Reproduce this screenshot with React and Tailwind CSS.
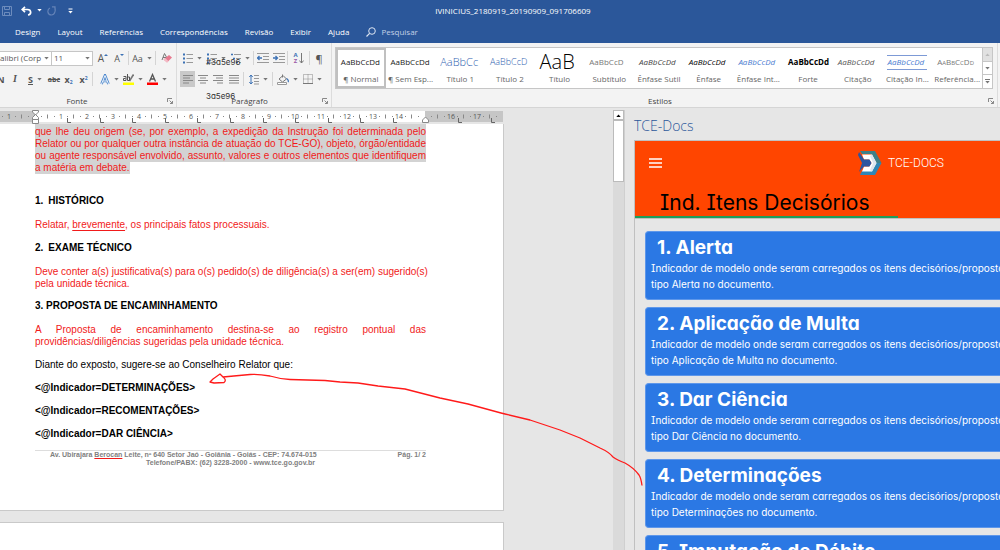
import React from "react";

const ui = "font-['Open_Sans','Noto_Sans',sans-serif]";
const rounded = "font-['Inter',sans-serif] [font-feature-settings:'cv11','cv08']";

function Caret({ className = "text-[#777]" }) {
  return (
    <svg viewBox="0 0 5 3" className={`h-[3px] w-[5px] shrink-0 ${className}`} aria-hidden="true">
      <path d="M.3 0h4.400L2.500 2.600z" fill="currentColor" />
    </svg>
  );
}

function Icon({ w = 12, h = 12, children }) {
  return (
    <svg width={w} height={h} viewBox={`0 0 ${w} ${h}`} fill="none" className="shrink-0" aria-hidden="true">
      {children}
    </svg>
  );
}

function Tool({ label, className = "w-4", caret, children }) {
  return (
    <button
      type="button"
      aria-label={label}
      className={`flex h-4 shrink-0 items-center justify-center gap-1 leading-none text-[#555] ${className}`}
    >
      {children}
      {caret && <Caret />}
    </button>
  );
}

const Sep = () => <span className="mx-px h-[14px] w-px shrink-0 bg-[#d4d4d4]" />;

function Launcher() {
  return (
    <button type="button" aria-label="Mais opções" className="flex h-3 w-3 items-center justify-center">
      <Icon w={6} h={6}>
        <path d="M.5 4V.5H5M2.500 2.500l3 3M5.500 3v2.500H3" stroke="#888" />
      </Icon>
    </button>
  );
}

function Group({ label, className, labelClass = "", children }) {
  return (
    <section className={`relative flex flex-col ${className}`} aria-label={label}>
      {children}
      <div className="mt-auto flex h-3 items-center">
        <span className={`flex-1 text-center text-[8px] leading-3 text-[#444] ${labelClass}`}>{label}</span>
        <Launcher />
      </div>
    </section>
  );
}

function TitleBar() {
  return (
    <div className="flex h-[21px] items-center">
      <div className="flex w-[76px] items-center text-white">
        <button type="button" aria-label="Salvar" className="ml-[2px]">
          <Icon w={10} h={10}>
            <path d="M.5.5h9v9h-9zM2.500.5v3h5v-3M2.500 9.500v-3h5v3" stroke="#6d8cbd" />
          </Icon>
        </button>
        <button type="button" aria-label="Desfazer" className="ml-[9px] flex items-center gap-[5px]">
          <Icon w={11} h={10}>
            <path d="M4 .8L1.200 3.500 4 6.200M1.500 3.500h5c4 0 4.200 5 .5 5.500" stroke="#fff" strokeWidth="1.700" />
          </Icon>
          <Caret className="text-white" />
        </button>
        <button type="button" aria-label="Refazer" className="ml-[5px]">
          <Icon w={9} h={10}>
            <path d="M5 .8h3v3M7.800 1.200C8.800 4 8 9 4.500 9 .2 9-.2 3.500 3 2" stroke="#6483b7" strokeWidth="1.200" />
          </Icon>
        </button>
        <button type="button" aria-label="Personalizar" className="ml-[12px]">
          <Icon w={5} h={6}>
            <path d="M.5 1h4" stroke="#fff" />
            <path d="M.3 3h4.400L2.500 5.500z" fill="#fff" />
          </Icon>
        </button>
      </div>
      <h1 className="flex-1 pr-[50px] text-center text-[8px] leading-3 text-white">
        IVINICIUS_2180919_20190909_091706609
      </h1>
    </div>
  );
}

const tabs = ["Design", "Layout", "Referências", "Correspondências", "Revisão", "Exibir", "Ajuda"];

function TabBar() {
  return (
    <nav className="flex h-[22px] items-center gap-[17px] pl-[15px] text-[8px] leading-3 text-white">
      {tabs.map((t) => (
        <button type="button" key={t}>
          {t}
        </button>
      ))}
      <button type="button" className="flex items-center gap-[5px] text-[#c3d0e6]">
        <Icon w={10} h={10}>
          <circle cx="6" cy="4" r="3.300" stroke="#dde5f2" />
          <path d="M3.600 6.400L.5 9.500" stroke="#dde5f2" strokeWidth="1.200" />
        </Icon>
        Pesquisar
      </button>
    </nav>
  );
}

function Combo({ label, value, className }) {
  return (
    <div className={`relative h-[15px] shrink-0 border border-[#c6c6c6] bg-white ${className}`}>
      <select
        aria-label={label}
        className="block h-full w-full appearance-none bg-transparent pl-[2px] text-[8px] leading-3 text-[#555]"
      >
        <option>{value}</option>
      </select>
      <span className="pointer-events-none absolute inset-y-0 right-[2px] flex items-center">
        <Caret />
      </span>
    </div>
  );
}

function FontGroup() {
  return (
    <Group label="Fonte" labelClass="pr-[10px]" className="w-[177px] shrink-0 border-r border-[#dcdcdc] pt-[6px]">
      <div className="-ml-[8px] flex h-[18px] items-center">
        <Combo label="Fonte" value="Calibri (Corp" className="w-[60px]" />
        <Combo label="Tamanho" value="11" className="-ml-px w-[42px]" />
        <Tool label="Aumentar fonte" className="ml-[2px] w-4">
          <span className="flex items-center">
            <span className="text-[10px]">A</span>
            <Icon w={4} h={10}><path d="M0 3h4L2 1z" fill="#3d72b5" /></Icon>
          </span>
        </Tool>
        <Tool label="Diminuir fonte">
          <span className="flex items-center">
            <span className="text-[9px]">A</span>
            <Icon w={4} h={10}><path d="M0 1h4L2 3z" fill="#3d72b5" /></Icon>
          </span>
        </Tool>
        <Sep />
        <Tool label="Maiúsculas e minúsculas" className="w-[24px]" caret>
          <span className="text-[9px]">Aa</span>
        </Tool>
        <Sep />
        <Tool label="Limpar formatação" className="w-[19px]">
          <Icon w={12} h={12}>
            <path d="M1 8L3.500 1.500 6 6M2 5.500h3" stroke="#777" />
            <path d="M2.500 7.500L8 3l3 2.500L6 10.500z" fill="#e8798f" />
            <path d="M2.500 7.500L6 10.500l1.500-1.300L4.200 6z" fill="#f3bcc7" />
          </Icon>
        </Tool>
      </div>
      <div className="-ml-[5px] mt-[4px] flex h-4 items-center">
        <Tool label="Negrito" className="w-[12px]"><b className="text-[9px]">N</b></Tool>
        <Tool label="Itálico"><i className="font-['Liberation_Serif',serif] text-[10px] font-bold">I</i></Tool>
        <Tool label="Sublinhado" className="w-[24px]" caret><b className="text-[9px] underline">S</b></Tool>
        <Tool label="Tachado" className="w-[14px]"><b className="text-[7px] line-through">abc</b></Tool>
        <Tool label="Subscrito" className="w-[15px]">
          <b className="text-[9px]">x<sub className="text-[5px] text-[#3d72b5]">2</sub></b>
        </Tool>
        <Tool label="Sobrescrito" className="w-[15px]">
          <b className="text-[9px]">x<sup className="text-[5px] text-[#3d72b5]">2</sup></b>
        </Tool>
        <Sep />
        <Tool label="Efeitos de texto" className="ml-[3px] w-[24px]" caret>
          <Icon w={10} h={11}>
            <path d="M1.500 10L5 1.500 8.500 10M3 7h4" stroke="#4a86cc" strokeWidth="2.600" />
            <path d="M1.500 10L5 1.500 8.500 10M3 7h4" stroke="#fff" strokeWidth=".9" />
          </Icon>
        </Tool>
        <Tool label="Cor do realce" className="w-[24px]" caret>
          <Icon w={11} h={12}>
            <path d="M0 9.500h11v2.500H0z" fill="#ff0" />
            <path d="M6.500 8L10.500 1.500" stroke="#777" strokeWidth="1.600" />
            <path d="M.5 3.500h2.500v4h-2.500v-2h2M4.500 1v6.500h2v-3.500h-2" stroke="#555" />
          </Icon>
        </Tool>
        <Tool label="Cor da fonte" className="w-[24px]" caret>
          <Icon w={11} h={12}>
            <path d="M2.500 8.500l3-7 3 7M3.500 6h4" stroke="#555" strokeWidth="1.300" />
            <path d="M0 9.500h11v2.500H0z" fill="#f00" />
          </Icon>
        </Tool>
      </div>
    </Group>
  );
}

function ListIcon() {
  return (
    <Icon w={10} h={11}>
      <path d="M0 1.500h2M0 5.500h2M0 9.500h2" stroke="#3d72b5" strokeWidth="2" />
      <path d="M3.500 1.500h6.500M3.500 5.500h6.500M3.500 9.500h6.500" stroke="#999" />
    </Icon>
  );
}

function IndentIcon({ flip }) {
  return (
    <Icon w={12} h={10}>
      <path d="M0 .5h12M6 3.500h6M6 6.500h6M0 9.500h12" stroke="#999" />
      <path d={flip ? "M0 5h4M2.500 3l2 2-2 2" : "M5 5H1M2.500 3l-2 2 2 2"} stroke="#3d72b5" strokeWidth="1.300" />
    </Icon>
  );
}

function AlignIcon({ d }) {
  return (
    <Icon w={10} h={9}>
      <path d={d} stroke="#888" />
    </Icon>
  );
}

function ParagraphGroup() {
  return (
    <Group label="Parágrafo" labelClass="pl-[3px]" className="w-[155px] shrink-0 border-r border-[#dcdcdc] pt-[6px]">
      <div className="flex h-[18px] items-center pl-[4px]">
        <Tool label="Marcadores" className="w-[23px]" caret><ListIcon /></Tool>
        <Tool label="Numeração" className="w-[24px]" caret><ListIcon /></Tool>
        <Tool label="Lista de vários níveis" className="w-[24px]" caret>
          <Icon w={10} h={11}>
            <path d="M0 1.500h2M2 5.500h2M5 9.500h2" stroke="#3d72b5" strokeWidth="1.500" />
            <path d="M3 1.500h7M5 5.500h5M8 9.500h2" stroke="#999" />
          </Icon>
        </Tool>
        <Sep />
        <Tool label="Diminuir recuo" className="w-[16px]"><IndentIcon /></Tool>
        <Tool label="Aumentar recuo" className="w-[15px]"><IndentIcon flip /></Tool>
        <Sep />
        <Tool label="Classificar" className="w-[19px]">
          <span className="flex items-center gap-px">
            <span className="flex flex-col text-[6px] font-bold leading-[6px]">
              <span className="text-[#3d72b5]">A</span>
              <span className="text-[#9b59a8]">Z</span>
            </span>
            <Icon w={5} h={11}><path d="M2.500 0v10M.3 7.500l2.200 2.500 2.200-2.500" stroke="#777" /></Icon>
          </span>
        </Tool>
        <Sep />
        <Tool label="Mostrar tudo" className="w-[16px]"><span className="text-[11px]">¶</span></Tool>
      </div>
      <div className="mt-[4px] flex h-4 items-center pl-[3px]">
        <Tool label="Alinhar à esquerda" className="w-[15px] bg-[#c9c9c9]"><AlignIcon d="M0 .5h10M0 3h7M0 5.500h10M0 8h6" /></Tool>
        <Tool label="Centralizar" className="w-[15px]"><AlignIcon d="M0 .5h10M2 3h6M0 5.500h10M2 8h6" /></Tool>
        <Tool label="Alinhar à direita" className="w-[15px]"><AlignIcon d="M0 .5h10M3 3h7M0 5.500h10M4 8h6" /></Tool>
        <Tool label="Justificar" className="w-[17px]"><AlignIcon d="M0 .5h10M0 3h10M0 5.500h10M0 8h10" /></Tool>
        <Sep />
        <Tool label="Espaçamento" className="w-[26px]" caret>
          <Icon w={10} h={11}>
            <path d="M2 1v9M.3 3L2 1l1.700 2M.3 8L2 10l1.700-2" stroke="#3d72b5" />
            <path d="M5 1.500h5M5 4.500h5M5 7.500h5M5 10h5" stroke="#999" />
          </Icon>
        </Tool>
        <Sep />
        <Tool label="Sombreamento" className="w-[27px]" caret>
          <Icon w={12} h={11}>
            <path d="M2 5l4-3.500L9.500 5 5.500 8zM5.500 3.500V.5" stroke="#777" />
            <path d="M9.500 4.500c2 1 2 3 1.500 3.500" stroke="#3d72b5" strokeWidth="1.300" />
            <path d="M.5 8.500h9v2h-9z" stroke="#999" fill="#fff" />
          </Icon>
        </Tool>
        <Tool label="Bordas" className="w-[22px]" caret>
          <Icon w={10} h={10}>
            <path d="M.5.5h9v9h-9zM5 .5v9M.5 5h9" stroke="#888" strokeDasharray="1 1" />
            <path d="M0 9.500h10" stroke="#777" />
          </Icon>
        </Tool>
      </div>
      <span className={`pointer-events-none absolute left-[29px] top-[13px] text-[8px] leading-3 text-[#333] ${rounded}`}>
        #3a5e96
      </span>
      <span className={`pointer-events-none absolute left-[29px] top-[47px] text-[8px] leading-3 text-[#333] ${rounded}`}>
        3a5e96
      </span>
    </Group>
  );
}

const styles = [
  ["¶ Normal", "AaBbCcDd", "text-[8px] text-[#222]"],
  ["¶ Sem Esp...", "AaBbCcDd", "text-[8px] text-[#222]"],
  ["Título 1", "AaBbCc", "text-[11px] font-light text-[#2f62b0]"],
  ["Título 2", "AaBbCcD", "text-[9px] font-light text-[#2f62b0]"],
  ["Título", "AaB", "text-[20px] font-light leading-none text-black"],
  ["Subtítulo", "AaBbCcD", "text-[8px] text-[#777]"],
  ["Ênfase Sutil", "AaBbCcDd", "text-[8px] italic text-[#444]"],
  ["Ênfase", "AaBbCcDd", "text-[8px] italic text-black"],
  ["Ênfase Int...", "AaBbCcDd", "text-[8px] italic text-[#4a7bd0]"],
  ["Forte", "AaBbCcDd", "text-[8px] font-bold text-black"],
  ["Citação", "AaBbCcDd", "text-[8px] italic text-[#555]"],
  ["Citação In...", "AaBbCcDd", "border-y border-[#7d9ad6] text-[8px] italic text-[#4a7bd0]"],
  ["Referência...", "AaBbCcDd", "text-[8px] [font-variant:small-caps] text-[#777]"],
];

function StylesGroup() {
  return (
    <Group label="Estilos" className="mr-[2px] min-w-0 flex-1 border-r border-[#dcdcdc] pl-[3px] pt-[4px]">
      <div className="mr-[4px] flex h-[42px] border border-[#c6c6c6] bg-white">
        <div className="grid min-w-0 flex-1 grid-cols-[repeat(13,minmax(0,1fr))]">
          {styles.map(([name, sample, cls], i) => (
            <button
              type="button"
              key={name}
              className={`flex flex-col items-center justify-center border-2 ${
                i === 0 ? "border-[#c0c0c0]" : "border-transparent"
              }`}
            >
              <span className="flex h-[22px] items-center">
                <span className={`flex h-[15px] w-[40px] items-center whitespace-nowrap ${cls}`}>
                  {sample}
                </span>
              </span>
              <span className="whitespace-nowrap text-[8px] leading-3 text-[#666]">{name}</span>
            </button>
          ))}
        </div>
        <div className="flex w-[10px] flex-col divide-y divide-[#c6c6c6] border-l border-[#c6c6c6]">
          <button type="button" aria-label="Subir" className="flex flex-1 items-center justify-center bg-[#e1e1e1]">
            <Caret className="rotate-180 text-[#bbb]" />
          </button>
          <button type="button" aria-label="Descer" className="flex flex-1 items-center justify-center">
            <Caret />
          </button>
          <button type="button" aria-label="Expandir" className="flex flex-1 flex-col items-center justify-center gap-px">
            <span className="h-px w-[5px] bg-[#777]" />
            <Caret />
          </button>
        </div>
      </div>
    </Group>
  );
}

function Ruler() {
  const units = Array.from({ length: 18 }, (_, i) => i);
  return (
    <svg width="503" height="14" viewBox="0 0 503 14" className="shrink-0" aria-hidden="true">
      <path d="M0 1h503v11H0z" fill="#c6c6c6" />
      <path d="M35 1h390v11H35z" fill="#fff" />
      <g fill="#555" fontFamily="Open Sans, sans-serif" fontSize="7" textAnchor="middle">
        <text x="9" y="9">1</text>
        {units.filter((n) => n > 0 && n !== 15).map((n) => (
          <text key={n} x={35 + n * 26} y="9">{n}</text>
        ))}
      </g>
      <g stroke="#888" fill="none">
        {[-2, -1, ...units].map((n) => {
          const x = 35 + n * 26;
          return <path key={n} d={`M${x + 6} 6.500h1M${x + 12.500} 4.500v4M${x + 19} 6.500h1`} />;
        })}
        {Array.from({ length: 14 }, (_, i) => i)
          .filter((i) => i !== 11)
          .map((i) => {
            const x = Math.round(67 + i * 32.600) + 0.500;
            return <path key={i} d={`M${x} 8v4.500h3.500`} stroke="#666" />;
          })}
      </g>
      <g fill="#fff" stroke="#888">
        <path d="M32.500.5h6v1.500l-3 3-3-3zM32.500 9.500v-2l3-3 3 3v2zM32.500 9.500h6v4h-6z" />
        <path d="M422.500 12.500V10l3-3 3 3v2.500z" />
      </g>
    </svg>
  );
}

const selected = [
  "que lhe deu origem (se, por exemplo, a expedição da Instrução foi determinada pelo",
  "Relator ou por qualquer outra instância de atuação do TCE-GO), objeto, órgão/entidade",
  "ou agente responsável envolvido, assunto, valores e outros elementos que identifiquem",
];

const Line = ({ children, className = "" }) => (
  <span className={`block whitespace-nowrap [text-align-last:justify] ${className}`}>{children}</span>
);

function Document() {
  return (
    <main className="w-[504px] shrink-0 overflow-hidden font-['Liberation_Sans',Arial,sans-serif]">
      <Ruler />
      <article className="h-[387px] border-b border-r border-[#c9c9c9] bg-white pl-[35px] pr-[77px] text-[10px] leading-3 text-black">
        <div className="text-[#f11a1a]">
          {selected.map((t, i) => (
            <Line key={t} className={`bg-[#d3d3d3] ${i === 0 ? "pt-[2px]" : ""}`}>{t}</Line>
          ))}
          <span className="block w-fit bg-[#d3d3d3]">a matéria em debate.</span>
        </div>
        <h2 className="mt-[21px] flex gap-[5px] font-bold"><span>1.</span>HISTÓRICO</h2>
        <p className="mt-3 text-[#f11a1a]">
          Relatar, <span className="underline underline-offset-2">brevemente</span>, os principais fatos processuais.
        </p>
        <h2 className="mt-[11px] flex gap-[5px] font-bold"><span>2.</span>EXAME TÉCNICO</h2>
        <p className="mt-3 text-[#f11a1a]">
          <Line>Deve conter a(s) justificativa(s) para o(s) pedido(s) de diligência(s) a ser(em) sugerido(s)</Line>
          pela unidade técnica.
        </p>
        <h2 className="mt-[10px] font-bold">3. PROPOSTA DE ENCAMINHAMENTO</h2>
        <p className="mt-3 text-[#f11a1a]">
          <Line>A Proposta de encaminhamento destina-se ao registro pontual das</Line>
          providências/diligências sugeridas pela unidade técnica.
        </p>
        <p className="mt-[11px]">Diante do exposto, sugere-se ao Conselheiro Relator que:</p>
        <p className="mt-[11px] font-bold">&lt;@Indicador=DETERMINAÇÕES&gt;</p>
        <p className="mt-[11px] font-bold">&lt;@Indicador=RECOMENTAÇÕES&gt;</p>
        <p className="mt-[11px] font-bold">&lt;@Indicador=DAR CIÊNCIA&gt;</p>
        <footer className="mt-[10px] border-t border-[#ddd] text-[7px] font-bold leading-[8px] text-[#808080]">
          <div className="flex justify-between pl-[15px]">
            <span>
              Av. Ubirajara <span className="underline decoration-[#f11a1a]">Berocan</span> Leite, nº 640 Setor
              Jaó - Goiânia - Goiás - CEP: 74.674-015
            </span>
            <span>Pág. 1/ 2</span>
          </div>
          <p className="text-center">Telefone/PABX: (62) 3228-2000 - www.tce.go.gov.br</p>
        </footer>
      </article>
      <article className="mt-[11px] h-[387px] border-r border-t border-[#c9c9c9] bg-white" aria-label="Página 2" />
    </main>
  );
}

const cards = ["Alerta", "Aplicação de Multa", "Dar Ciência", "Determinações", "Imputação de Débito"];

function TaskPane() {
  return (
    <aside className="flex min-w-0 flex-1 flex-col overflow-hidden border-l border-[#cfcfcf] pl-[9px]">
      <h2 className="h-[30px] shrink-0 pt-[6px] text-[14px] font-light leading-5 text-[#2b579a]">TCE-Docs</h2>
      <div className="flex-1 border-l border-t border-[#c0c0c0]">
        <header className="relative h-[78px] border-b border-[#c0c0c0] bg-[#ff4500]">
          <div className="flex h-[43px] items-center pl-[14px]">
            <button type="button" aria-label="Menu" className="w-[209px]">
              <Icon w={13} h={10}>
                <path d="M0 1h13M0 5h13M0 9h13" stroke="#fff" strokeWidth="1.400" />
              </Icon>
            </button>
            <Icon w={24} h={24}>
              <path d="M2 0h15l6.500 12H17L13 3H4z" fill="#3f8088" />
              <path d="M23.500 12L17 24H2l2-4h9l4-8z" fill="#2f86b5" />
              <path d="M4 3.500h10L18.500 12 14 20.500H4l2-5h5l2.500-3.500L11 8.500H6z" fill="#fff" />
              <path d="M14 3.500L18.500 12 14 20.500l-2-1.500 3-7-3-7z" fill="#dfe6ee" />
              <path d="M1 1l5 7.500h5.500L13.500 12l-2 3.500H6L1 21l3-9L0 4z" fill="#2b55a0" />
            </Icon>
            <span className="ml-[6px] font-['Roboto',sans-serif] text-[12px] font-light text-white">TCE-DOCS</span>
          </div>
          <h3 className={`pl-[25px] text-[21px] leading-[38px] text-black ${rounded}`}>Ind. Itens Decisórios</h3>
          <span className="absolute bottom-0 left-0 h-[2px] w-[263px] bg-[#1f9d5b]" />
        </header>
        <ul className="flex flex-col gap-[7px] pl-[10px] pt-[12px]">
          {cards.map((c, i) => (
            <li
              key={c}
              className={`h-[69px] rounded-l-[4px] border-y border-l border-[#5e97ea] bg-[#2b78e4] pl-[5px] text-white ${rounded}`}
            >
              <h4 className="pl-[6px] pt-[3px] text-[19px] font-bold leading-[25px]">
                {i + 1}. {c}
              </h4>
              <p className="whitespace-nowrap text-[10px] leading-4">
                Indicador de modelo onde seram carregados os itens decisórios/proposta
                <br />
                tipo {c} no documento.
              </p>
            </li>
          ))}
        </ul>
      </div>
    </aside>
  );
}

export default function App() {
  return (
    <div className={`relative flex h-screen flex-col overflow-hidden bg-[#e6e6e6] ${ui}`}>
      <header className="shrink-0 bg-[#2b579a]">
        <TitleBar />
        <TabBar />
      </header>
      <div className="flex h-[65px] shrink-0 border-b border-[#d5d5d5] bg-[#f3f3f3]">
        <FontGroup />
        <ParagraphGroup />
        <StylesGroup />
      </div>
      <div className="flex min-h-0 flex-1 pt-[2px]">
        <Document />
        <div className="w-[109px] shrink-0" />
        <div className="flex w-[11px] shrink-0 flex-col bg-[#dadada]" aria-hidden="true">
          <span className="flex h-[10px] items-center justify-center border border-[#bbb] bg-white">
            <Caret className="rotate-180" />
          </span>
          <span className="h-[62px] border border-[#bbb] bg-white" />
        </div>
        <TaskPane />
      </div>
      <svg width="1000" height="550" viewBox="0 0 1000 550" fill="none" className="pointer-events-none absolute left-0 top-0" aria-hidden="true">
        <path
          d="M642 485.500Q641 478 639 475 634 468 625 463 617 460 613 457 609 452 600 448L580 438 560 430 530 420 505 414 501 413 468 404 440 398 405 389 378 386 358 383 340 382 325 380.500 290 379.500Q280 379 270 376 258 374 250 374.500L223 377 220 374 213 379 210 382 214 383 224 382.500Q227 380 223 377"
          stroke="#ff1a1a"
          strokeWidth="1.300"
          strokeLinejoin="round"
        />
      </svg>
    </div>
  );
}
